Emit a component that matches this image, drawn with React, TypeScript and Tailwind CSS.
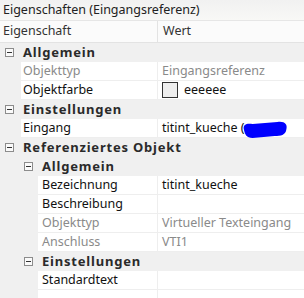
import React from 'react';

type Row =
  | { kind: 'cat'; level: number; label: string }
  | { kind: 'prop'; level: number; label: string; value?: React.ReactNode; muted?: boolean };

const Toggle: React.FC = () => (
  <span className="flex h-[9px] w-[9px] items-center justify-center border border-[#8c8c8c] bg-[#fafafa]">
    <span className="h-px w-[5px] bg-[#333]" />
  </span>
);

const Swatch: React.FC = () => (
  <span className="flex items-center gap-[6px]">
    <span className="h-[16px] w-[16px] border border-[#333] bg-[#eeeeee]" />
    <span>eeeeee</span>
  </span>
);

const Scribble: React.FC = () => (
  <svg width="46" height="18" viewBox="0 0 52 18" preserveAspectRatio="none" className="-ml-[3px] mt-[4px]">
    <path
      d="M2 8 C 1 3, 6 2, 12 3 L 40 1 C 48 0, 52 3, 50 9 C 49 14, 44 15, 37 15 L 12 17 C 5 17, 3 13, 2 8 Z"
      fill="#0000ff"
    />
  </svg>
);

const rows: Row[] = [
  { kind: 'cat', level: 0, label: 'Allgemein' },
  { kind: 'prop', level: 1, label: 'Objekttyp', value: 'Eingangsreferenz', muted: true },
  { kind: 'prop', level: 1, label: 'Objektfarbe', value: <Swatch /> },
  { kind: 'cat', level: 0, label: 'Einstellungen' },
  {
    kind: 'prop',
    level: 1,
    label: 'Eingang',
    value: (
      <span className="flex items-center">
        <span>titint_kueche (</span>
        <Scribble />
      </span>
    ),
  },
  { kind: 'cat', level: 0, label: 'Referenziertes Objekt' },
  { kind: 'cat', level: 1, label: 'Allgemein' },
  { kind: 'prop', level: 2, label: 'Bezeichnung', value: 'titint_kueche' },
  { kind: 'prop', level: 2, label: 'Beschreibung', value: '' },
  { kind: 'prop', level: 2, label: 'Objekttyp', value: 'Virtueller Texteingang', muted: true },
  { kind: 'prop', level: 2, label: 'Anschluss', value: 'VTI1', muted: true },
  { kind: 'cat', level: 1, label: 'Einstellungen' },
  { kind: 'prop', level: 2, label: 'Standardtext', value: '' },
];

export default function App() {
  return (
    <div className="flex h-[298px] w-[304px] flex-col overflow-hidden bg-white text-[12.5px] leading-none text-[#111]" style={{ fontFamily: '"Segoe UI", "Noto Sans", sans-serif' }}>
      {/* Window title */}
      <div className="flex h-[21px] shrink-0 items-center border-b border-[#e6e6e6] bg-gradient-to-b from-[#f1f1f1] to-[#f8f8f6] pl-[3px] text-[#222]">
        Eigenschaften (Eingangsreferenz)
      </div>

      {/* Column header */}
      <div className="flex h-[22px] shrink-0 border-b border-[#e3e3e3] bg-[#fbfbfb] text-[#333]">
        <div className="flex w-[158px] items-center border-r border-[#e3e3e3] pl-[3px]">Eigenschaft</div>
        <div className="flex items-center pl-[5px]">Wert</div>
      </div>

      {rows.map((row, i) =>
        row.kind === 'cat' ? (
          <div key={i} className="flex h-[19px] shrink-0 items-center bg-[#f0f0f0] text-[13px] font-bold tracking-[0.8px] text-[#2a2a2a]">
            <div className={`flex items-center ${row.level === 0 ? 'w-[23px] pl-[5px]' : 'w-[42px] pl-[24px]'}`}>
              <Toggle />
            </div>
            <span>{row.label}</span>
          </div>
        ) : (
          <div key={i} className="flex h-[19px] shrink-0 bg-[#f0f0f0]">
            <div className={`shrink-0 ${row.level === 1 ? 'w-[21px]' : 'w-[38px]'}`} />
            <div className={`flex flex-1 border-b border-[#eeeeee] bg-white ${row.muted ? 'text-[#8a8a8a]' : 'text-[#111]'}`}>
              <div className={`flex items-center border-r border-[#eeeeee] ${row.level === 1 ? 'w-[137px] pl-[2px]' : 'w-[120px] pl-[4px]'}`}>
                {row.label}
              </div>
              <div className="flex items-center pl-[4px]">{row.value}</div>
            </div>
          </div>
        )
      )}

      <div className="flex flex-1">
        <div className="w-[38px] bg-[#f0f0f0]" />
        <div className="flex-1 bg-white">
          <div className="h-full w-[120px] border-r border-[#eeeeee]" />
        </div>
      </div>
    </div>
  );
}
